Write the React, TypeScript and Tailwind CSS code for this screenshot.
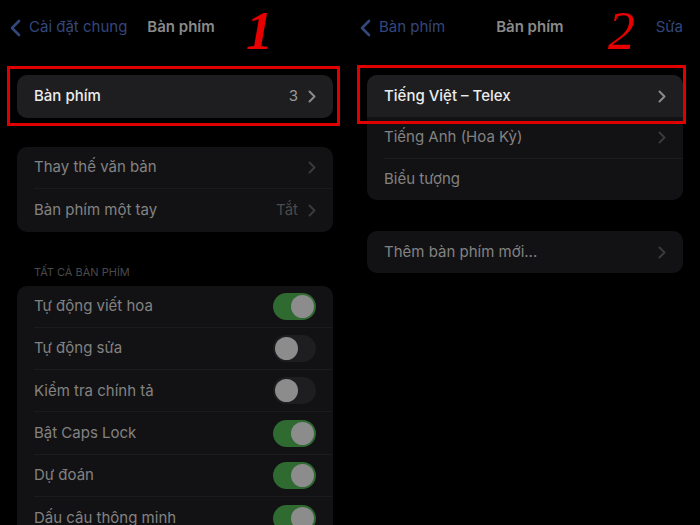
import React from "react";

const Chevron = ({ color }: { color: string }) => (
  <svg width="8" height="13" viewBox="0 0 8 13" fill="none">
    <path d="M1.5 1.5 L6.5 6.5 L1.5 11.5" stroke={color} strokeWidth="2" strokeLinecap="round" strokeLinejoin="round" />
  </svg>
);

const Back = () => (
  <svg width="11" height="18" viewBox="0 0 11 18" fill="none">
    <path d="M9 2 L2 9 L9 16" stroke="#33477d" strokeWidth="2.6" strokeLinecap="round" strokeLinejoin="round" />
  </svg>
);

const Toggle = ({ on }: { on: boolean }) => (
  <div
    className={`flex h-[27px] w-[43px] items-center rounded-full px-[2px] ${
      on ? "justify-end bg-[#2f6a31]" : "justify-start bg-[#1e1e20]"
    }`}
  >
    <div className="h-[23px] w-[23px] rounded-full bg-[#8c8c8c]" />
  </div>
);

const DimRow = ({
  label,
  right,
  last,
  tall = true,
}: {
  label: string;
  right?: React.ReactNode;
  last?: boolean;
  tall?: boolean;
}) => (
  <div className={`flex items-center pl-[17px] ${tall ? "h-[42.3px]" : "h-[41.5px]"}`}>
    <div
      className={`flex h-full flex-1 items-center justify-between pr-[17px] ${
        last ? "" : "border-b border-[#1b1b1d]"
      }`}
    >
      <span className="text-[15px] text-[#828282]">{label}</span>
      {right}
    </div>
  </div>
);

export default function App() {
  return (
    <div
      className="flex h-[525px] w-[700px] overflow-hidden bg-black"
      style={{ fontFamily: "Inter, 'Noto Sans', sans-serif" }}
    >
      {/* LEFT SCREEN */}
      <div className="flex w-[350px] shrink-0 flex-col">
        <div className="relative flex h-[55px] shrink-0 items-center">
          <div className="flex items-center pl-[10px]">
            <Back />
            <span className="ml-[8px] text-[15px] text-[#33477d]">Cài đặt chung</span>
          </div>
          <span className="ml-[20px] text-[15px] font-semibold text-[#8a8a8a]">Bàn phím</span>
          <span
            className="absolute left-[246px] top-[4px] text-[54px] font-bold italic leading-none text-[#e60000]"
            style={{ fontFamily: "'Liberation Serif', serif" }}
          >
            1
          </span>
        </div>

        <div className="shrink-0 px-[17px]">
          <div className="relative mt-[20px]">
            <div className="flex h-[43px] items-center justify-between rounded-[10px] bg-[#1e1e20] pl-[17px] pr-[17px]">
              <span className="text-[15px] font-medium text-[#ececec]">Bàn phím</span>
              <div className="flex items-center gap-[10px]">
                <span className="text-[15px] text-[#9b9b9b]">3</span>
                <Chevron color="#8a8a8e" />
              </div>
            </div>
            <div className="absolute -bottom-[8px] -left-[10px] -right-[7px] -top-[9px] border-[3px] border-[#e00000]" />
          </div>

          <div className="mt-[29px] overflow-hidden rounded-[10px] bg-[#121214]">
            <DimRow label="Thay thế văn bản" right={<Chevron color="#3a3a3c" />} />
            <DimRow
              label="Bàn phím một tay"
              last
              right={
                <div className="flex items-center gap-[10px]">
                  <span className="text-[15px] text-[#4a4a4a]">Tắt</span>
                  <Chevron color="#3a3a3c" />
                </div>
              }
            />
          </div>

          <div className="mt-[33px] pl-[17px] text-[11px] leading-[14px] text-[#4a4a4a]">TẤT CẢ BÀN PHÍM</div>

          <div className="mt-[7px] overflow-hidden rounded-[10px] bg-[#121214]">
            <DimRow label="Tự động viết hoa" right={<Toggle on />} />
            <DimRow label="Tự động sửa" right={<Toggle on={false} />} />
            <DimRow label="Kiểm tra chính tả" right={<Toggle on={false} />} />
            <DimRow label="Bật Caps Lock" right={<Toggle on />} />
            <DimRow label="Dự đoán" right={<Toggle on />} />
            <DimRow label="Dấu câu thông minh" right={<Toggle on />} last />
          </div>
        </div>
      </div>

      {/* RIGHT SCREEN */}
      <div className="flex w-[350px] shrink-0 flex-col">
        <div className="relative flex h-[55px] shrink-0 items-center">
          <div className="flex items-center pl-[10px]">
            <Back />
            <span className="ml-[8px] text-[15px] text-[#33477d]">Bàn phím</span>
          </div>
          <span className="ml-[51px] text-[15px] font-semibold text-[#8a8a8a]">Bàn phím</span>
          <span
            className="absolute left-[258px] top-[4px] text-[54px] italic leading-none text-[#e60000]"
            style={{ fontFamily: "'Liberation Serif', serif" }}
          >
            2
          </span>
          <span className="absolute right-[17px] text-[15px] text-[#33477d]">Sửa</span>
        </div>

        <div className="shrink-0 px-[17px]">
          <div className="relative mt-[20px]">
            <div className="overflow-hidden rounded-[10px] bg-[#121214]">
              <div className="flex h-[42px] items-center justify-between bg-[#1e1e20] pl-[17px] pr-[17px]">
                <span className="text-[15px] font-medium text-[#ececec]">Tiếng Việt – Telex</span>
                <Chevron color="#8a8a8e" />
              </div>
              <DimRow label="Tiếng Anh (Hoa Kỳ)" right={<Chevron color="#3a3a3c" />} tall={false} />
              <DimRow label="Biểu tượng" last tall={false} />
            </div>
            <div className="absolute -left-[10px] -right-[3px] -top-[10px] h-[59px] border-[3px] border-[#e00000]" />
          </div>

          <div className="mt-[31px] overflow-hidden rounded-[10px] bg-[#121214]">
            <DimRow label="Thêm bàn phím mới..." right={<Chevron color="#3a3a3c" />} last />
          </div>
        </div>
      </div>
    </div>
  );
}
